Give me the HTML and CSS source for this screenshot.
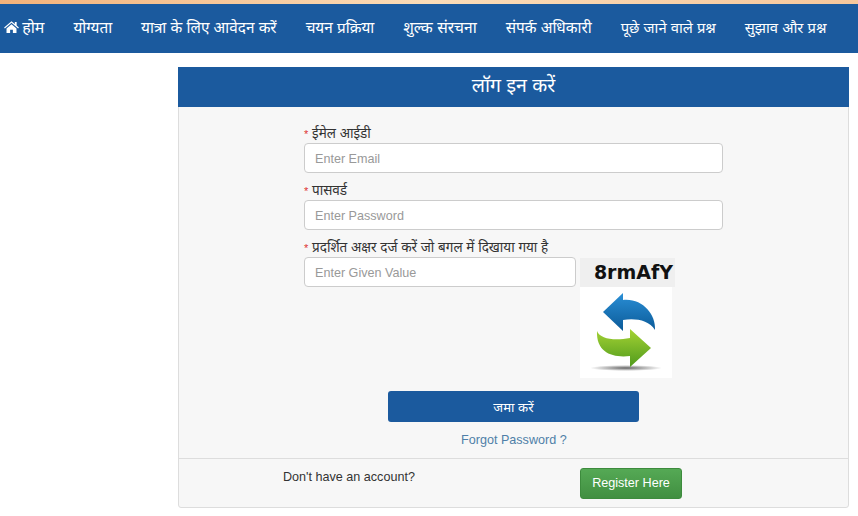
FILE: index.html
```html
<!DOCTYPE html>
<html lang="hi">
<head>
<meta charset="utf-8">
<title>लॉग इन करें</title>
<link rel="stylesheet" href="styles.css">
</head>
<body>
<div class="stripe"></div>
<nav class="nav">
  <a class="nav-item nav-home"><svg class="home-icon" viewBox="0 0 16 13"><path d="M8 .4 0 7l.8 1L8 2l7.2 6 .8-1-2.400-2V1h-2v2.300zM2.600 8v5h3.900V9.400h3V13h3.900V8L8 3.500z"/></svg>होम</a>
  <a class="nav-item">योग्यता</a>
  <a class="nav-item">यात्रा के लिए आवेदन करें</a>
  <a class="nav-item">चयन प्रक्रिया</a>
  <a class="nav-item nav-item-lg">शुल्क संरचना</a>
  <a class="nav-item">संपर्क अधिकारी</a>
  <a class="nav-item nav-item-sm">पूछे जाने वाले प्रश्न</a>
  <a class="nav-item nav-item-sm">सुझाव और प्रश्न</a>
</nav>
<main class="main">
  <section class="card">
    <h1 class="card-title">लॉग इन करें</h1>
    <form class="card-body">
      <div class="field">
        <label class="label"><span class="req">*</span> ईमेल आईडी</label>
        <input class="input" type="text" placeholder="Enter Email">
      </div>
      <div class="field">
        <label class="label"><span class="req">*</span> पासवर्ड</label>
        <input class="input" type="text" placeholder="Enter Password">
      </div>
      <div class="field">
        <label class="label"><span class="req">*</span> प्रदर्शित अक्षर दर्ज करें जो बगल में दिखाया गया है</label>
        <div class="captcha-row">
          <input class="input input-captcha" type="text" placeholder="Enter Given Value">
          <div class="captcha">
            <div class="captcha-code">8rmAfY</div>
            <div class="refresh">
              <svg viewBox="0 0 92 91" width="92" height="91">
                <defs>
                  <linearGradient id="blue" x1="0" y1="0" x2="0" y2="1"><stop offset="0" stop-color="#2a8fd6"/><stop offset="1" stop-color="#0b5a98"/></linearGradient>
                  <linearGradient id="green" x1="0" y1="0" x2="0" y2="1"><stop offset="0" stop-color="#a5d334"/><stop offset="1" stop-color="#4f9a1c"/></linearGradient>
                  <radialGradient id="shadow"><stop offset="0" stop-color="#666"/><stop offset="1" stop-color="#fff"/></radialGradient>
                </defs>
                <ellipse cx="46" cy="81" rx="36" ry="3" fill="url(#shadow)"/>
                <path fill="url(#blue)" d="M43 6 L23 25 L43 44 L43 33 C55 31 69 33 75 43 C76 27 62 11 43 13 Z"/>
                <path fill="url(#green)" d="M17 44 C20 52 34 54 50 51 L50 42 L71 61 L50 80 L50 69 C33 71 16 66 17 44 Z"/>
              </svg>
            </div>
          </div>
        </div>
      </div>
      <button class="submit" type="button">जमा करें</button>
      <a class="forgot">Forgot Password ?</a>
    </form>
    <footer class="card-footer">
      <span class="no-account">Don't have an account?</span>
      <a class="register">Register Here</a>
    </footer>
  </section>
</main>
</body>
</html>
```
FILE: styles.css
```css
* { box-sizing: border-box; }
html, body { margin: 0; padding: 0; }
body {
  background: #fff;
  color: #333;
  font-family: "Liberation Sans", "Noto Sans", "Noto Sans Devanagari", sans-serif;
  font-size: 14px;
  width: 858px;
  height: 516px;
  overflow: hidden;
}
.stripe {
  height: 4px;
  background: linear-gradient(90deg, #f3b27a, #fbdcb8 50%, #f6c79c);
}
.nav {
  height: 49px;
  background: #1b5a9e;
  display: flex;
  align-items: center;
  padding: 0 0 4px 4px;
  gap: 29px;
}
.nav-item {
  color: #fff;
  font-size: 15.3px;
  white-space: nowrap;
}
.nav-item-sm { font-size: 14.8px; }
.nav-item-lg { font-size: 15.6px; }
.nav-home { display: flex; align-items: center; gap: 3.200px; font-size: 16px; }
.home-icon { width: 15px; height: 12px; fill: #fff; }
.main { padding: 14px 9px 0 178px; }
.card {
  height: 441px;
  border: 1px solid #ddd;
  border-radius: 3px;
  background: #f7f7f7;
  display: flex;
  flex-direction: column;
}
.card-title {
  margin: -1px -1px 0;
  height: 40px;
  background: #1b5a9e;
  color: #fff;
  font-size: 19.500px;
  font-weight: 400;
  line-height: 36px;
  text-align: center;
}
.card-body {
  flex: 1;
  padding: 17px 0 0 125px;
  display: flex;
  flex-direction: column;
}
.field { margin-bottom: 8px; }
.label { display: block; font-size: 13.500px; line-height: 19px; }
.req { color: #d33; font-size: 11px; line-height: 1; }
.input {
  display: block;
  width: 419px;
  height: 30px;
  padding: 1px 10px 0;
  border: 1px solid #ccc;
  border-radius: 4px;
  background: #fff;
  font: 12.600px "Liberation Sans", sans-serif;
}
.input::placeholder { color: #999; opacity: 1; }
.input-captcha { width: 272px; }
.captcha-row { display: flex; gap: 4px; }
.captcha { width: 95px; margin-top: 1px; }
.captcha-code {
  height: 29px;
  background: #efefef;
  font: 700 19px/29px "DejaVu Sans", sans-serif;
  text-align: right;
  padding-right: 2px;
  color: #111;
}
.refresh { width: 92px; height: 91px; background: #fff; }
.refresh svg { display: block; }
.submit {
  align-self: flex-start;
  margin: 5px 0 0 84px;
  width: 251px;
  height: 31px;
  border: 0;
  border-radius: 3px;
  background: #1b5a9e;
  color: #fff;
  font: 13.2px "Liberation Sans", "Noto Sans", sans-serif;
}
.forgot {
  align-self: flex-start;
  margin: 11px 0 0 157px;
  color: #4f7fa8;
  font-size: 12.600px;
}
.card-footer {
  height: 49px;
  border-top: 1px solid #ddd;
  display: flex;
  align-items: flex-start;
  padding: 9px 0 0 104px;
}
.no-account { font-size: 12.600px; line-height: 19px; width: 297px; color: #333; }
.register {
  width: 102px;
  height: 31px;
  border: 1px solid #3d8b3d;
  border-radius: 3px;
  background: linear-gradient(#55a955, #418f41);
  color: #fff;
  font-size: 12.600px;
  line-height: 29px;
  text-align: center;
}
```
